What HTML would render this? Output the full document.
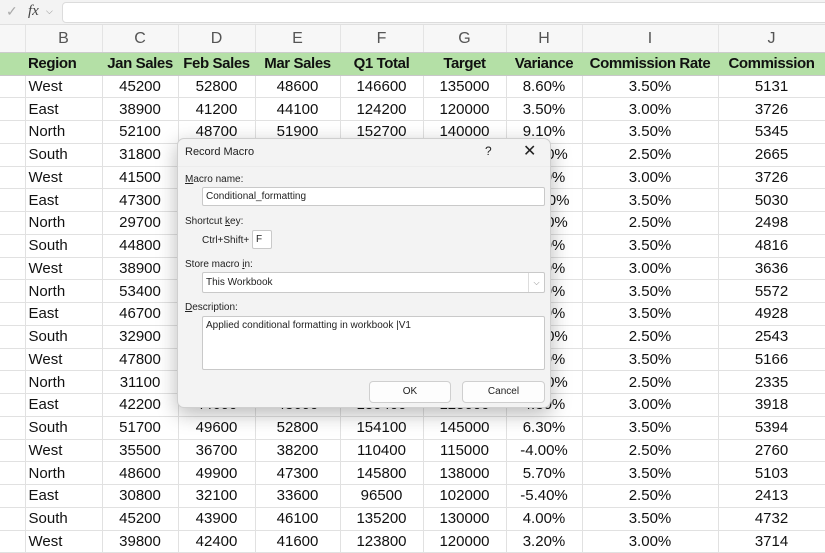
<!DOCTYPE html>
<html><head><meta charset="utf-8">
<style>
*{box-sizing:border-box;margin:0;padding:0}
body{width:825px;height:550px;overflow:hidden;background:#fff;font-family:"Liberation Sans",sans-serif;position:relative}
.fbar{position:absolute;left:0;top:0;width:825px;height:25px;background:#f3f3f3;border-bottom:1px solid #e0e0e0}
.fbox{position:absolute;left:62px;top:2px;width:770px;height:21px;background:#fff;border:1px solid #dcdcdc;border-radius:4px}
.fx{position:absolute;left:28px;top:3px;font-family:"Liberation Serif",serif;font-style:italic;font-size:15px;color:#444}
table{position:absolute;left:0;top:25px;width:825px;border-collapse:collapse;table-layout:fixed}
td{border-right:1px solid #e1e1e1;border-bottom:1px solid #e1e1e1;font-size:15px;color:#111;text-align:center;white-space:nowrap;overflow:hidden;height:22.75px;padding:0 2px;line-height:21px}
tr.ch td{height:27px;background:#f7f7f7;color:#555;font-size:16px;border-bottom:1px solid #ccc;border-right:1px solid #e4e4e4}
tr.hd td{background:#b4e0a6;font-weight:bold;height:23px;border-right:none;border-bottom:1px solid #c8c8c8;letter-spacing:-0.4px;padding:0}
td.l{text-align:left;padding-left:3px!important}
td.rn{background:#fff}
.dlg{position:absolute;left:177px;top:138px;width:374px;height:270px;background:#f3f3f3;border:1px solid #cfcfcf;border-radius:7px;box-shadow:0 6px 20px rgba(0,0,0,.28);font-size:10px;color:#222}
.dlg .t{position:absolute;left:7px;top:7px;font-size:11px}
.dlg .lb{position:absolute;left:7px}
.in{position:absolute;background:#fff;border:1px solid #c9c9c9;border-radius:2px;font-size:10px;padding:3px 3px;line-height:12px}
.btn{position:absolute;top:242px;height:22px;background:#fdfdfd;border:1px solid #cfcfcf;border-radius:4px;text-align:center;line-height:20px;font-size:10px}
u{text-decoration:underline}
</style></head><body>
<div class="fbar"><div style="position:absolute;left:6px;top:3px;color:#aaa;font-size:14px">✓</div><div class="fx">fx</div><div style="position:absolute;left:46px;top:6px;color:#888;font-size:9px">&#x2335;</div><div class="fbox"></div></div>
<table>
<colgroup><col style="width:25px"><col style="width:77px"><col style="width:76px"><col style="width:77px"><col style="width:85px"><col style="width:83px"><col style="width:83px"><col style="width:76px"><col style="width:136px"><col style="width:107px"></colgroup>
<tr class="ch"><td></td><td>B</td><td>C</td><td>D</td><td>E</td><td>F</td><td>G</td><td>H</td><td>I</td><td>J</td></tr>
<tr class="hd"><td class="rn"></td><td class="l">Region</td><td>Jan Sales</td><td>Feb Sales</td><td>Mar Sales</td><td>Q1 Total</td><td>Target</td><td>Variance</td><td>Commission Rate</td><td>Commission</td></tr>
<tr><td></td><td class="l">West</td><td>45200</td><td>52800</td><td>48600</td><td>146600</td><td>135000</td><td>8.60%</td><td>3.50%</td><td>5131</td></tr>
<tr><td></td><td class="l">East</td><td>38900</td><td>41200</td><td>44100</td><td>124200</td><td>120000</td><td>3.50%</td><td>3.00%</td><td>3726</td></tr>
<tr><td></td><td class="l">North</td><td>52100</td><td>48700</td><td>51900</td><td>152700</td><td>140000</td><td>9.10%</td><td>3.50%</td><td>5345</td></tr>
<tr><td></td><td class="l">South</td><td>31800</td><td>35200</td><td>39600</td><td>106600</td><td>110000</td><td>-3.10%</td><td>2.50%</td><td>2665</td></tr>
<tr><td></td><td class="l">West</td><td>41500</td><td>39800</td><td>42900</td><td>124200</td><td>115000</td><td>8.00%</td><td>3.00%</td><td>3726</td></tr>
<tr><td></td><td class="l">East</td><td>47300</td><td>48900</td><td>47500</td><td>143700</td><td>125000</td><td>15.00%</td><td>3.50%</td><td>5030</td></tr>
<tr><td></td><td class="l">North</td><td>29700</td><td>32400</td><td>37800</td><td>99900</td><td>105000</td><td>-4.90%</td><td>2.50%</td><td>2498</td></tr>
<tr><td></td><td class="l">South</td><td>44800</td><td>46100</td><td>46700</td><td>137600</td><td>130000</td><td>5.80%</td><td>3.50%</td><td>4816</td></tr>
<tr><td></td><td class="l">West</td><td>38900</td><td>40200</td><td>42100</td><td>121200</td><td>115000</td><td>5.40%</td><td>3.00%</td><td>3636</td></tr>
<tr><td></td><td class="l">North</td><td>53400</td><td>52800</td><td>52900</td><td>159100</td><td>145000</td><td>9.70%</td><td>3.50%</td><td>5572</td></tr>
<tr><td></td><td class="l">East</td><td>46700</td><td>47100</td><td>47000</td><td>140800</td><td>130000</td><td>8.30%</td><td>3.50%</td><td>4928</td></tr>
<tr><td></td><td class="l">South</td><td>32900</td><td>33800</td><td>35000</td><td>101700</td><td>105000</td><td>-3.10%</td><td>2.50%</td><td>2543</td></tr>
<tr><td></td><td class="l">West</td><td>47800</td><td>49100</td><td>50700</td><td>147600</td><td>140000</td><td>5.40%</td><td>3.50%</td><td>5166</td></tr>
<tr><td></td><td class="l">North</td><td>31100</td><td>30900</td><td>31400</td><td>93400</td><td>100000</td><td>-6.60%</td><td>2.50%</td><td>2335</td></tr>
<tr><td></td><td class="l">East</td><td>42200</td><td>44600</td><td>43600</td><td>130400</td><td>125000</td><td>4.30%</td><td>3.00%</td><td>3918</td></tr>
<tr><td></td><td class="l">South</td><td>51700</td><td>49600</td><td>52800</td><td>154100</td><td>145000</td><td>6.30%</td><td>3.50%</td><td>5394</td></tr>
<tr><td></td><td class="l">West</td><td>35500</td><td>36700</td><td>38200</td><td>110400</td><td>115000</td><td>-4.00%</td><td>2.50%</td><td>2760</td></tr>
<tr><td></td><td class="l">North</td><td>48600</td><td>49900</td><td>47300</td><td>145800</td><td>138000</td><td>5.70%</td><td>3.50%</td><td>5103</td></tr>
<tr><td></td><td class="l">East</td><td>30800</td><td>32100</td><td>33600</td><td>96500</td><td>102000</td><td>-5.40%</td><td>2.50%</td><td>2413</td></tr>
<tr><td></td><td class="l">South</td><td>45200</td><td>43900</td><td>46100</td><td>135200</td><td>130000</td><td>4.00%</td><td>3.50%</td><td>4732</td></tr>
<tr><td></td><td class="l">West</td><td>39800</td><td>42400</td><td>41600</td><td>123800</td><td>120000</td><td>3.20%</td><td>3.00%</td><td>3714</td></tr>
</table>
<div class="dlg">
<div class="t">Record Macro</div>
<div style="position:absolute;left:307px;top:5px;font-size:12px">?</div>
<div style="position:absolute;left:345px;top:2px;font-size:16px">✕</div>
<div style="position:absolute;left:0;top:27px;width:372px;height:1px;background:#ececec"></div>
<div class="lb" style="top:35px"><u>M</u>acro name:</div>
<div class="in" style="left:24px;top:48px;width:343px;height:19px">Conditional_formatting</div>
<div class="lb" style="top:77px">Shortcut <u>k</u>ey:</div>
<div style="position:absolute;left:24px;top:96px">Ctrl+Shift+</div>
<div class="in" style="left:74px;top:91px;width:20px;height:19px">F</div>
<div class="lb" style="top:120px">Store macro <u>i</u>n:</div>
<div class="in" style="left:24px;top:133px;width:343px;height:21px;line-height:13px">This Workbook<div style="position:absolute;right:0;top:0;width:16px;height:19px;border-left:1px solid #ddd;color:#888;font-size:8px;text-align:center;line-height:19px">&#x2335;</div></div>
<div class="lb" style="top:163px"><u>D</u>escription:</div>
<div class="in" style="left:24px;top:177px;width:343px;height:54px">Applied conditional formatting in workbook |V1</div>
<div class="btn" style="left:191px;width:82px">OK</div>
<div class="btn" style="left:284px;width:83px">Cancel</div>
</div>
</body></html>
